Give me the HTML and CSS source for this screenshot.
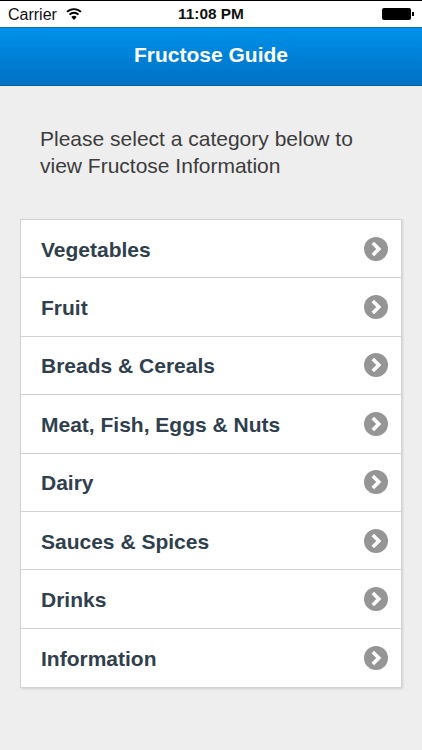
FILE: index.html
```html
<!DOCTYPE html>
<html lang="en">
<head>
<meta charset="utf-8">
<title>Fructose Guide</title>
<link rel="stylesheet" href="styles.css">
</head>
<body>
<div class="status">
  <div class="status-left">
    <span>Carrier</span>
    <svg class="wifi" viewBox="0 0 16 12" width="16" height="12"><path d="M8 12 5.3 8.9a4 4 0 0 1 5.4 0Z" fill="#000"/><path d="M3.5 6.6a6.4 6.4 0 0 1 9 0M1 3.9a10 10 0 0 1 14 0" fill="none" stroke="#000" stroke-width="1.8"/></svg>
  </div>
  <div class="status-time">11:08 PM</div>
  <div class="status-right"><span class="battery"></span><span class="battery-tip"></span></div>
</div>
<header class="nav"><span class="nav-title">Fructose Guide</span></header>
<main class="content">
  <p class="intro">Please select a category below to<br>view Fructose Information</p>
  <ul class="list">
    <li class="row"><span class="label">Vegetables</span><svg class="chev" viewBox="0 0 24 24"><circle cx="12" cy="12" r="12" fill="#959595"/><path d="M8.8 6 14.8 12l-6 6" fill="none" stroke="#fff" stroke-width="3.6"/></svg></li>
    <li class="row"><span class="label">Fruit</span><svg class="chev" viewBox="0 0 24 24"><circle cx="12" cy="12" r="12" fill="#959595"/><path d="M8.8 6 14.8 12l-6 6" fill="none" stroke="#fff" stroke-width="3.6"/></svg></li>
    <li class="row"><span class="label">Breads &amp; Cereals</span><svg class="chev" viewBox="0 0 24 24"><circle cx="12" cy="12" r="12" fill="#959595"/><path d="M8.8 6 14.8 12l-6 6" fill="none" stroke="#fff" stroke-width="3.6"/></svg></li>
    <li class="row"><span class="label">Meat, Fish, Eggs &amp; Nuts</span><svg class="chev" viewBox="0 0 24 24"><circle cx="12" cy="12" r="12" fill="#959595"/><path d="M8.8 6 14.8 12l-6 6" fill="none" stroke="#fff" stroke-width="3.6"/></svg></li>
    <li class="row"><span class="label">Dairy</span><svg class="chev" viewBox="0 0 24 24"><circle cx="12" cy="12" r="12" fill="#959595"/><path d="M8.8 6 14.8 12l-6 6" fill="none" stroke="#fff" stroke-width="3.6"/></svg></li>
    <li class="row"><span class="label">Sauces &amp; Spices</span><svg class="chev" viewBox="0 0 24 24"><circle cx="12" cy="12" r="12" fill="#959595"/><path d="M8.8 6 14.8 12l-6 6" fill="none" stroke="#fff" stroke-width="3.6"/></svg></li>
    <li class="row"><span class="label">Drinks</span><svg class="chev" viewBox="0 0 24 24"><circle cx="12" cy="12" r="12" fill="#959595"/><path d="M8.8 6 14.8 12l-6 6" fill="none" stroke="#fff" stroke-width="3.6"/></svg></li>
    <li class="row"><span class="label">Information</span><svg class="chev" viewBox="0 0 24 24"><circle cx="12" cy="12" r="12" fill="#959595"/><path d="M8.8 6 14.8 12l-6 6" fill="none" stroke="#fff" stroke-width="3.6"/></svg></li>
  </ul>
</main>
</body>
</html>
```
FILE: styles.css
```css
* { box-sizing: border-box; }
html, body { margin: 0; height: 100%; }
body {
  width: 422px;
  height: 750px;
  overflow: hidden;
  background: #eeeeee;
  font-family: "Liberation Sans", Arial, sans-serif;
}
.status {
  height: 27px;
  background: #fff;
  border-top: 1px solid #000;
  display: grid;
  grid-template-columns: 1fr auto 1fr;
  align-items: center;
  padding: 2px 8px 0;
  font-size: 16px;
  color: #111;
}
.status-left { display: flex; align-items: center; gap: 9px; }
.wifi { display: block; margin-top: -3px; }
.status-time { font-weight: 700; font-size: 15.4px; margin-top: -2px; }
.status-right { display: flex; justify-content: flex-end; align-items: center; margin-top: -2px; }
.battery { width: 29px; height: 12px; background: #000; border-radius: 2px; }
.battery-tip { width: 2px; height: 4px; background: #000; margin-left: 1px; }
.nav {
  height: 59px;
  background: linear-gradient(#0091ea, #0071c4);
  border-top: 1px solid #0a6cb0;
  border-bottom: 1px solid #0a5f9c;
  display: flex;
  align-items: center;
  justify-content: center;
  color: #fff;
  font-weight: 700;
  font-size: 21px;
}
.nav-title { margin-top: -3px; }
.content { padding: 0 20px; }
.intro {
  margin: 0;
  padding: 40px 0 0 20px;
  height: 133px;
  font-size: 21px;
  line-height: 26.5px;
  color: #3c3c3c;
}
.list {
  list-style: none;
  margin: 0;
  padding: 0;
  width: 382px;
  background: #fff;
  border: 1px solid #d2d2d2;
  box-shadow: 1px 1px 2px rgba(0, 0, 0, 0.12);
}
.row {
  height: 58.4px;
  display: flex;
  align-items: center;
  justify-content: space-between;
  padding: 0 13px 0 20px;
  border-bottom: 1px solid #d2d2d2;
  font-size: 21px;
  font-weight: 700;
  color: #2f3f4d;
}
.row:last-child { border-bottom: 0; }
.label { padding-top: 2px; }
.chev { width: 24px; height: 24px; display: block; }
```
